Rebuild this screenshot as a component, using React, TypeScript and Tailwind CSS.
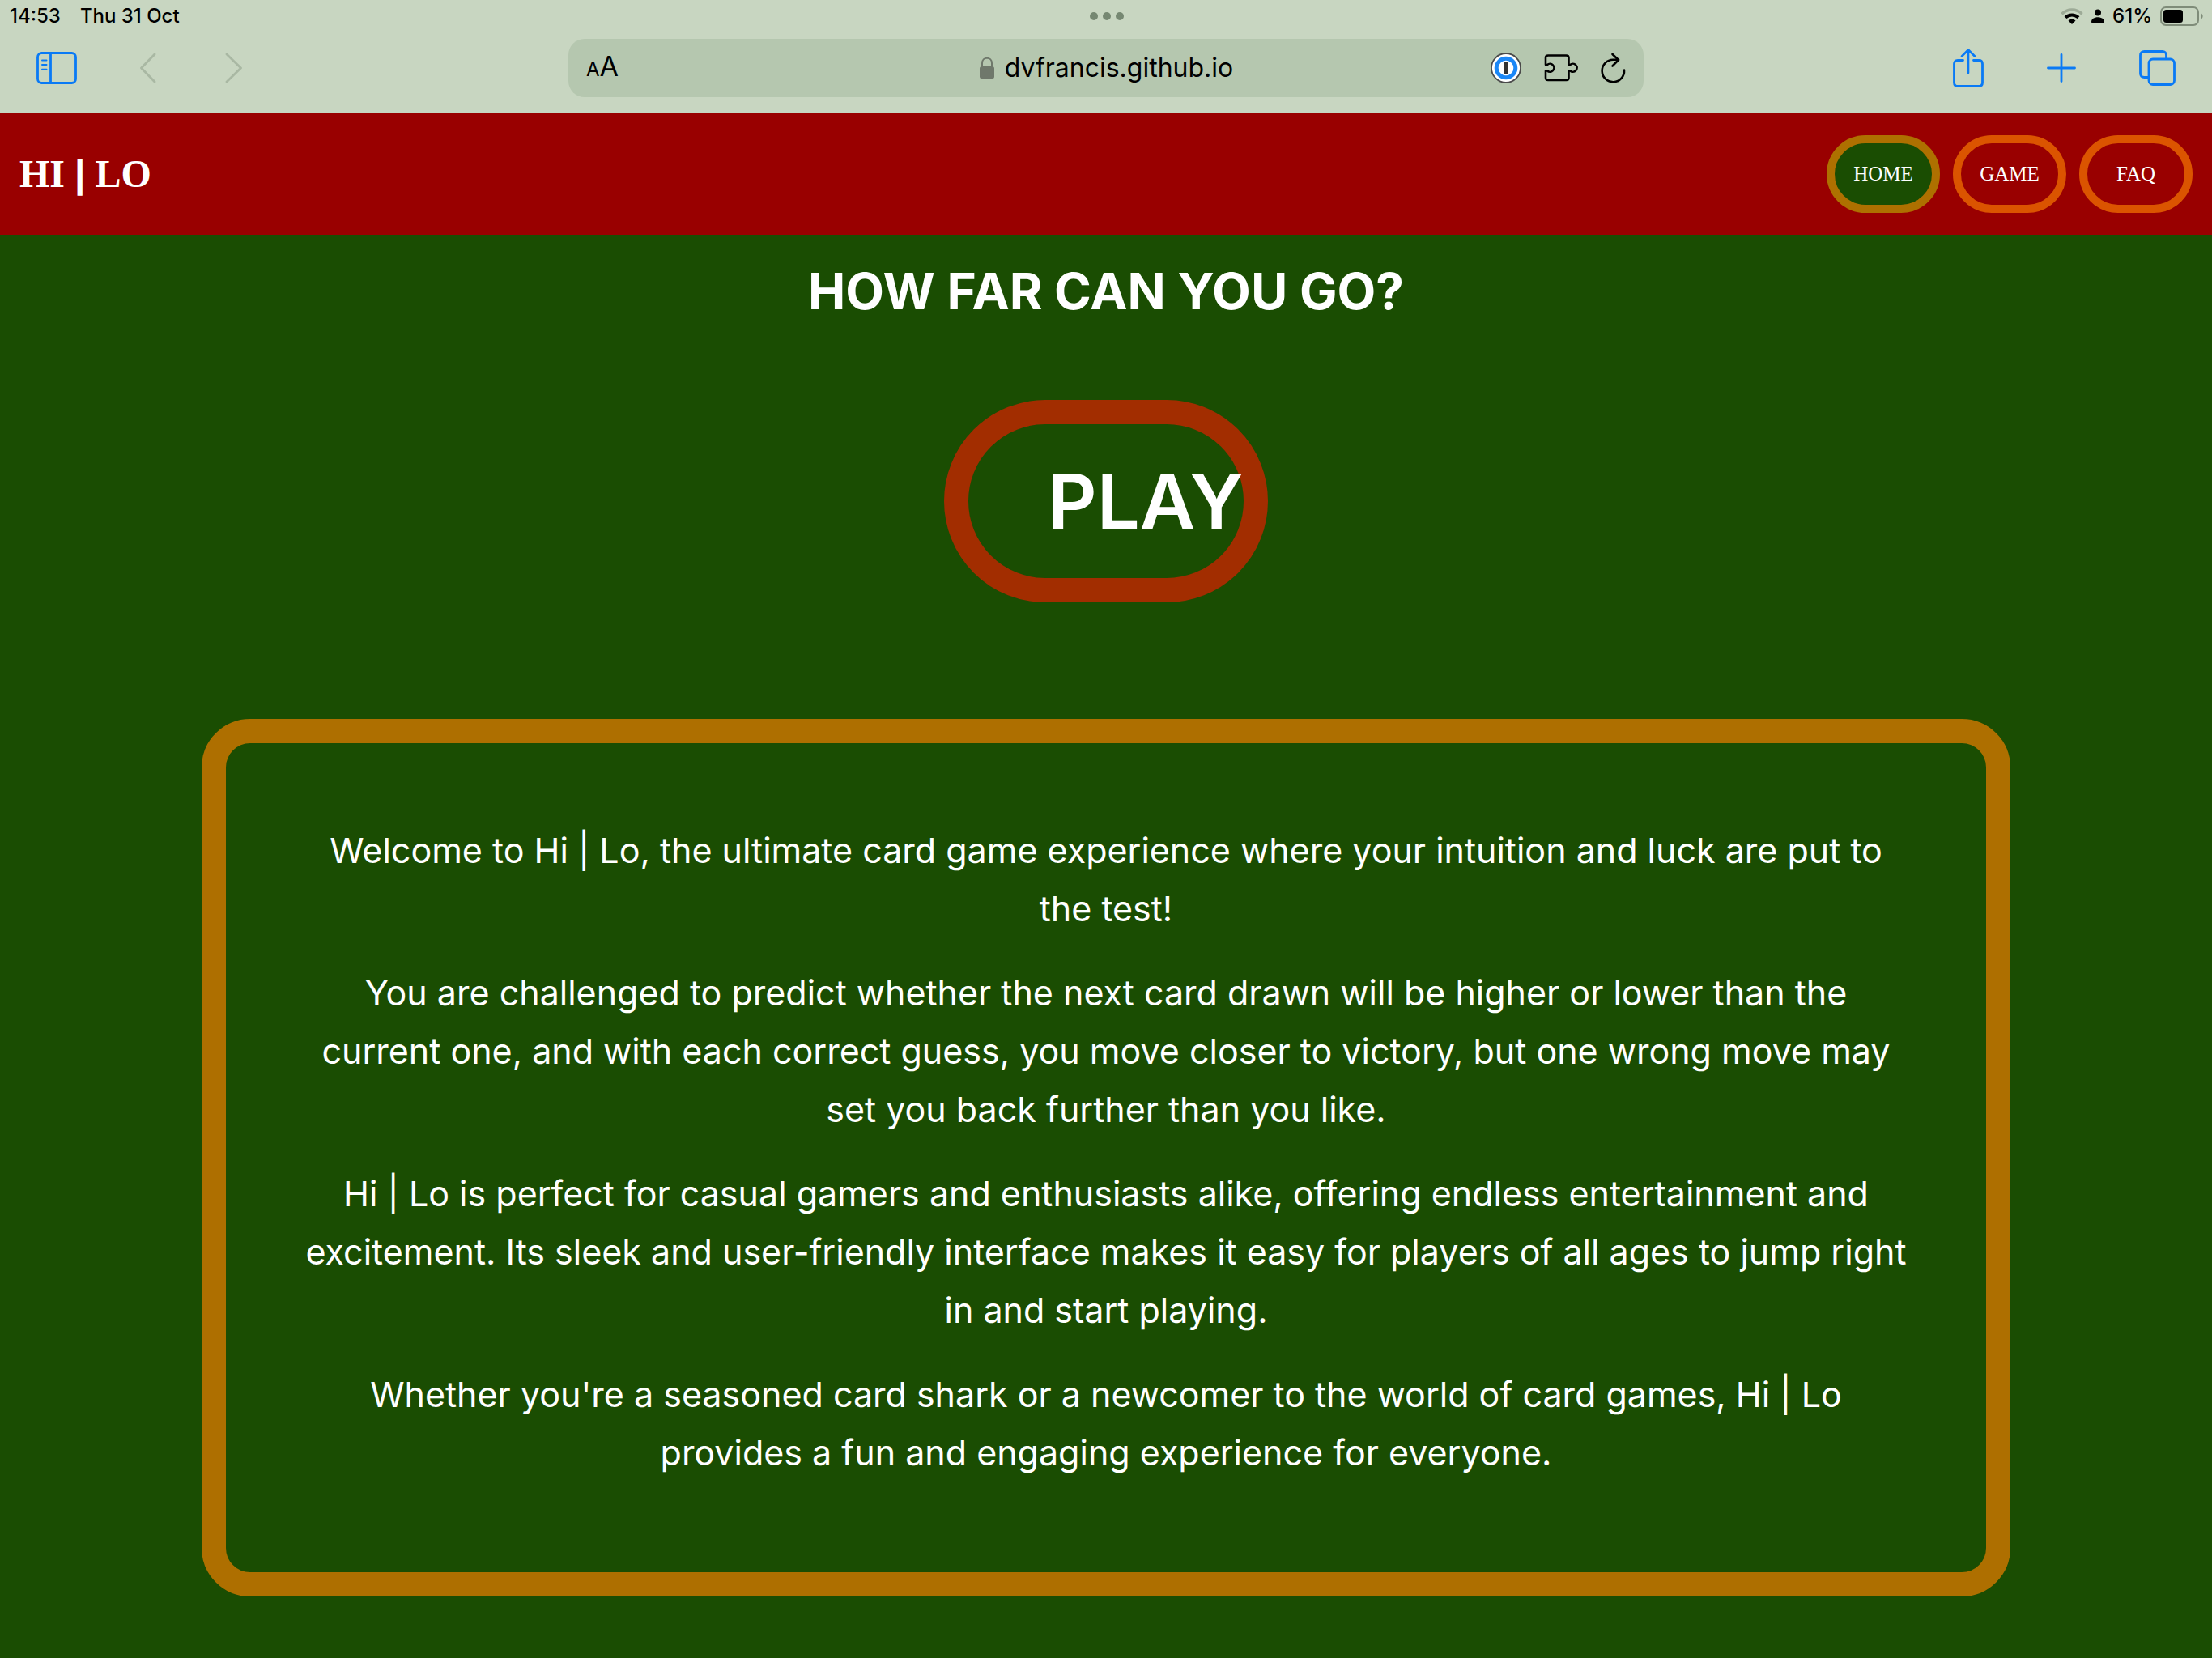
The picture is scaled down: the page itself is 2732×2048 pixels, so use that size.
import React from "react";

const NAV_LINKS = [
  { label: "HOME", active: true },
  { label: "GAME", active: false },
  { label: "FAQ", active: false },
];

const PARAGRAPHS = [
  "Welcome to Hi | Lo, the ultimate card game experience where your intuition and luck are put to the test!",
  "You are challenged to predict whether the next card drawn will be higher or lower than the current one, and with each correct guess, you move closer to victory, but one wrong move may set you back further than you like.",
  "Hi | Lo is perfect for casual gamers and enthusiasts alike, offering endless entertainment and excitement. Its sleek and user-friendly interface makes it easy for players of all ages to jump right in and start playing.",
  "Whether you're a seasoned card shark or a newcomer to the world of card games, Hi | Lo provides a fun and engaging experience for everyone.",
];

function StatusBar() {
  return (
    <div className="grid h-10 grid-cols-[1fr_auto_1fr] items-center pr-[10px] pl-3 text-[24px] leading-10 font-medium text-black">
      <div className="flex gap-6">
        <span>14:53</span>
        <span>Thu 31 Oct</span>
      </div>
      <button aria-label="Multitasking" className="flex gap-[6px]">
        <span className="size-[10px] rounded-full bg-[#768872]" />
        <span className="size-[10px] rounded-full bg-[#768872]" />
        <span className="size-[10px] rounded-full bg-[#768872]" />
      </button>
      <div className="flex items-center justify-end gap-[10px]">
        <svg width="28" height="20" viewBox="0 0 28 20" fill="none" strokeWidth="4">
          <path d="M1.5 7.2C8.5.3 19.5.3 26.5 7.2" stroke="#9dab97" strokeWidth="3.6" />
          <path d="M6 11.6C10.5 7.4 17.5 7.4 22 11.6" stroke="#000" />
          <path d="M9.500 15.500C12 13.300 16 13.300 18.500 15.500L14 20Z" fill="#000" />
        </svg>
        <svg width="16" height="18" viewBox="0 0 16 18" fill="#000">
          <circle cx="8" cy="4.500" r="4" />
          <path d="M0 16C0 12.500 3.500 10.300 8 10.300S16 12.500 16 16Q16 17.500 14.500 17.500H1.500Q0 17.500 0 16Z" />
        </svg>
        <span>61%</span>
        <svg width="54" height="24" viewBox="0 0 54 24" fill="none">
          <rect x="1" y="1" width="46" height="22" rx="6" stroke="#7f8c79" strokeWidth="2" />
          <rect x="4" y="4" width="24" height="16" rx="3.500" fill="#000" />
          <path d="M50 8C53.500 9.500 53.500 14.500 50 16Z" fill="#7f8c79" />
        </svg>
      </div>
    </div>
  );
}

function Toolbar() {
  return (
    <div className="flex items-center px-[45px] pt-2 pb-5">
      <div className="flex flex-1 items-center gap-[78px]">
        <button aria-label="Show sidebar">
          <svg width="50" height="40" viewBox="0 0 50 40" fill="none" stroke="#0a7af5" strokeWidth="2.800" strokeLinecap="round">
            <rect x="1.500" y="1.500" width="47" height="37" rx="5" />
            <path d="M17.500 1.500V38.500" />
            <path d="M7 10.500H12.500M7 16H12.500M7 21.700H12.500" strokeWidth="2" />
          </svg>
        </button>
        <button aria-label="Back">
          <svg width="24" height="38" viewBox="0 0 24 38" fill="none" stroke="#a9b8a3" strokeWidth="2.800" strokeLinecap="round" strokeLinejoin="round">
            <path d="M18 2L1.500 19L18 36" />
          </svg>
        </button>
        <button aria-label="Forward">
          <svg width="24" height="38" viewBox="0 0 24 38" fill="none" stroke="#a9b8a3" strokeWidth="2.800" strokeLinecap="round" strokeLinejoin="round">
            <path d="M5 2L22.500 19L5 36" />
          </svg>
        </button>
      </div>

      <div className="grid h-[72px] w-[1328px] grid-cols-[1fr_auto_1fr] items-center rounded-[20px] bg-[#b5c7af] px-[22px] text-black">
        <button aria-label="Page settings" className="flex items-baseline justify-self-start leading-10">
          <span className="text-[24px]">A</span>
          <span className="text-[34px]">A</span>
        </button>
        <label className="flex items-center gap-3">
          <svg width="20" height="28" viewBox="0 0 20 28" fill="none">
            <path d="M4 13V8C4 -0.500 16 -0.500 16 8V13" stroke="#6f786b" strokeWidth="2" />
            <rect x="1" y="12" width="18" height="15" rx="2.500" fill="#6f786b" />
          </svg>
          <input
            type="text"
            aria-label="Address"
            defaultValue="dvfrancis.github.io"
            className="bg-transparent text-[32px] leading-10 outline-none [field-sizing:content]"
          />
        </label>
        <div className="flex items-center gap-7 justify-self-end">
          <button aria-label="Password manager">
            <svg width="38" height="38" viewBox="0 0 38 38">
              <circle cx="19" cy="19" r="18" fill="#fff" stroke="#4a4a4a" strokeWidth="1.800" />
              <circle cx="19" cy="19" r="11.800" fill="#fff" stroke="#1b87f6" strokeWidth="5" />
              <rect x="16.700" y="12" width="4.600" height="14.500" fill="#333" />
            </svg>
          </button>
          <button aria-label="Extensions">
            <svg width="42" height="34" viewBox="0 0 42 34" fill="none" stroke="#000" strokeWidth="2.600" strokeLinejoin="round" strokeLinecap="round">
              <path d="M5 1.500H27.500Q30.500 1.500 30.500 4.500V13H32.300A5 5 0 1 1 32.300 20.500H30.500V29Q30.500 32 27.500 32H5Q2 32 2 29V20.500H4A5 5 0 1 0 4 13H2V4.500Q2 1.500 5 1.500Z" />
            </svg>
          </button>
          <button aria-label="Reload">
            <svg width="31" height="38" viewBox="0 0 31 38" fill="none" stroke="#000" strokeWidth="2.600" strokeLinecap="round" strokeLinejoin="round">
              <path d="M29 21.500A13.700 13.700 0 1 1 15.300 8.800H22" />
              <path d="M14.500 2L22 9L14.500 16.500" />
            </svg>
          </button>
        </div>
      </div>

      <div className="flex flex-1 items-center justify-end gap-[78px]">
        <button aria-label="Share">
          <svg width="38" height="48" viewBox="0 0 38 48" fill="none" stroke="#0a7af5" strokeWidth="2.800" strokeLinecap="round" strokeLinejoin="round">
            <path d="M12.500 14.500H6Q1.500 14.500 1.500 19V42Q1.500 46.500 6 46.500H32Q36.500 46.500 36.500 42V19Q36.500 14.500 32 14.500H25.500" />
            <path d="M19 30V1.500M11 9.500L19 1.500L27 9.500" strokeWidth="2.600" />
          </svg>
        </button>
        <button aria-label="New tab">
          <svg width="36" height="36" viewBox="0 0 36 36" fill="none" stroke="#0a7af5" strokeWidth="2.800" strokeLinecap="round">
            <path d="M18 1.500V34.500M1.500 18H34.500" />
          </svg>
        </button>
        <button aria-label="Tab overview">
          <svg width="45" height="44" viewBox="0 0 45 44" fill="none" stroke="#0a7af5" strokeWidth="2.800">
            <rect x="12" y="11" width="31.500" height="31.500" rx="5" />
            <path d="M33.500 10.500V6.500Q33.500 1.500 28.500 1.500H6.500Q1.500 1.500 1.500 6.500V28.500Q1.500 33.500 6.500 33.500H11" />
          </svg>
        </button>
      </div>
    </div>
  );
}

function SiteHeader() {
  return (
    <header className="flex h-[150px] items-center justify-between bg-[#990000] px-6 font-['Liberation_Serif',serif] text-white">
      <a href="#home" className="text-[48px] leading-none font-bold">
        HI <span className="font-['Liberation_Sans',sans-serif]">|</span> LO
      </a>
      <nav className="flex gap-4">
        {NAV_LINKS.map((link) => (
          <a
            key={link.label}
            href={`#${link.label.toLowerCase()}`}
            className={
              link.active
                ? "flex h-24 w-[140px] items-center justify-center rounded-full border-[10px] border-[#ae7000] bg-[#1a4d02] text-[25px]"
                : "flex h-24 w-[140px] items-center justify-center rounded-full border-[10px] border-[#db5400] text-[25px]"
            }
          >
            {link.label}
          </a>
        ))}
      </nav>
    </header>
  );
}

export default function App() {
  return (
    <div className="min-h-screen bg-[#1a4d02] font-['Inter',sans-serif]">
      <div className="bg-[#c8d6c1]">
        <StatusBar />
        <Toolbar />
      </div>
      <SiteHeader />
      <main className="flex flex-col items-center pt-8 text-white">
        <h1 className="text-[62px] leading-[76px] font-bold">HOW FAR CAN YOU GO?</h1>
        <button className="mt-24 flex h-[250px] w-[400px] items-center rounded-full border-[30px] border-[#a22d00] pl-[98px] text-[94px] leading-none font-semibold">
          PLAY
        </button>
        <section className="mt-36 w-full px-[249px]">
          <div className="flex flex-col gap-8 rounded-[60px] border-[30px] border-[#ae6f00] px-24 pt-24 pb-28 text-center text-[43px] leading-[72px]">
            {PARAGRAPHS.map((text) => (
              <p key={text}>{text}</p>
            ))}
          </div>
        </section>
      </main>
    </div>
  );
}
